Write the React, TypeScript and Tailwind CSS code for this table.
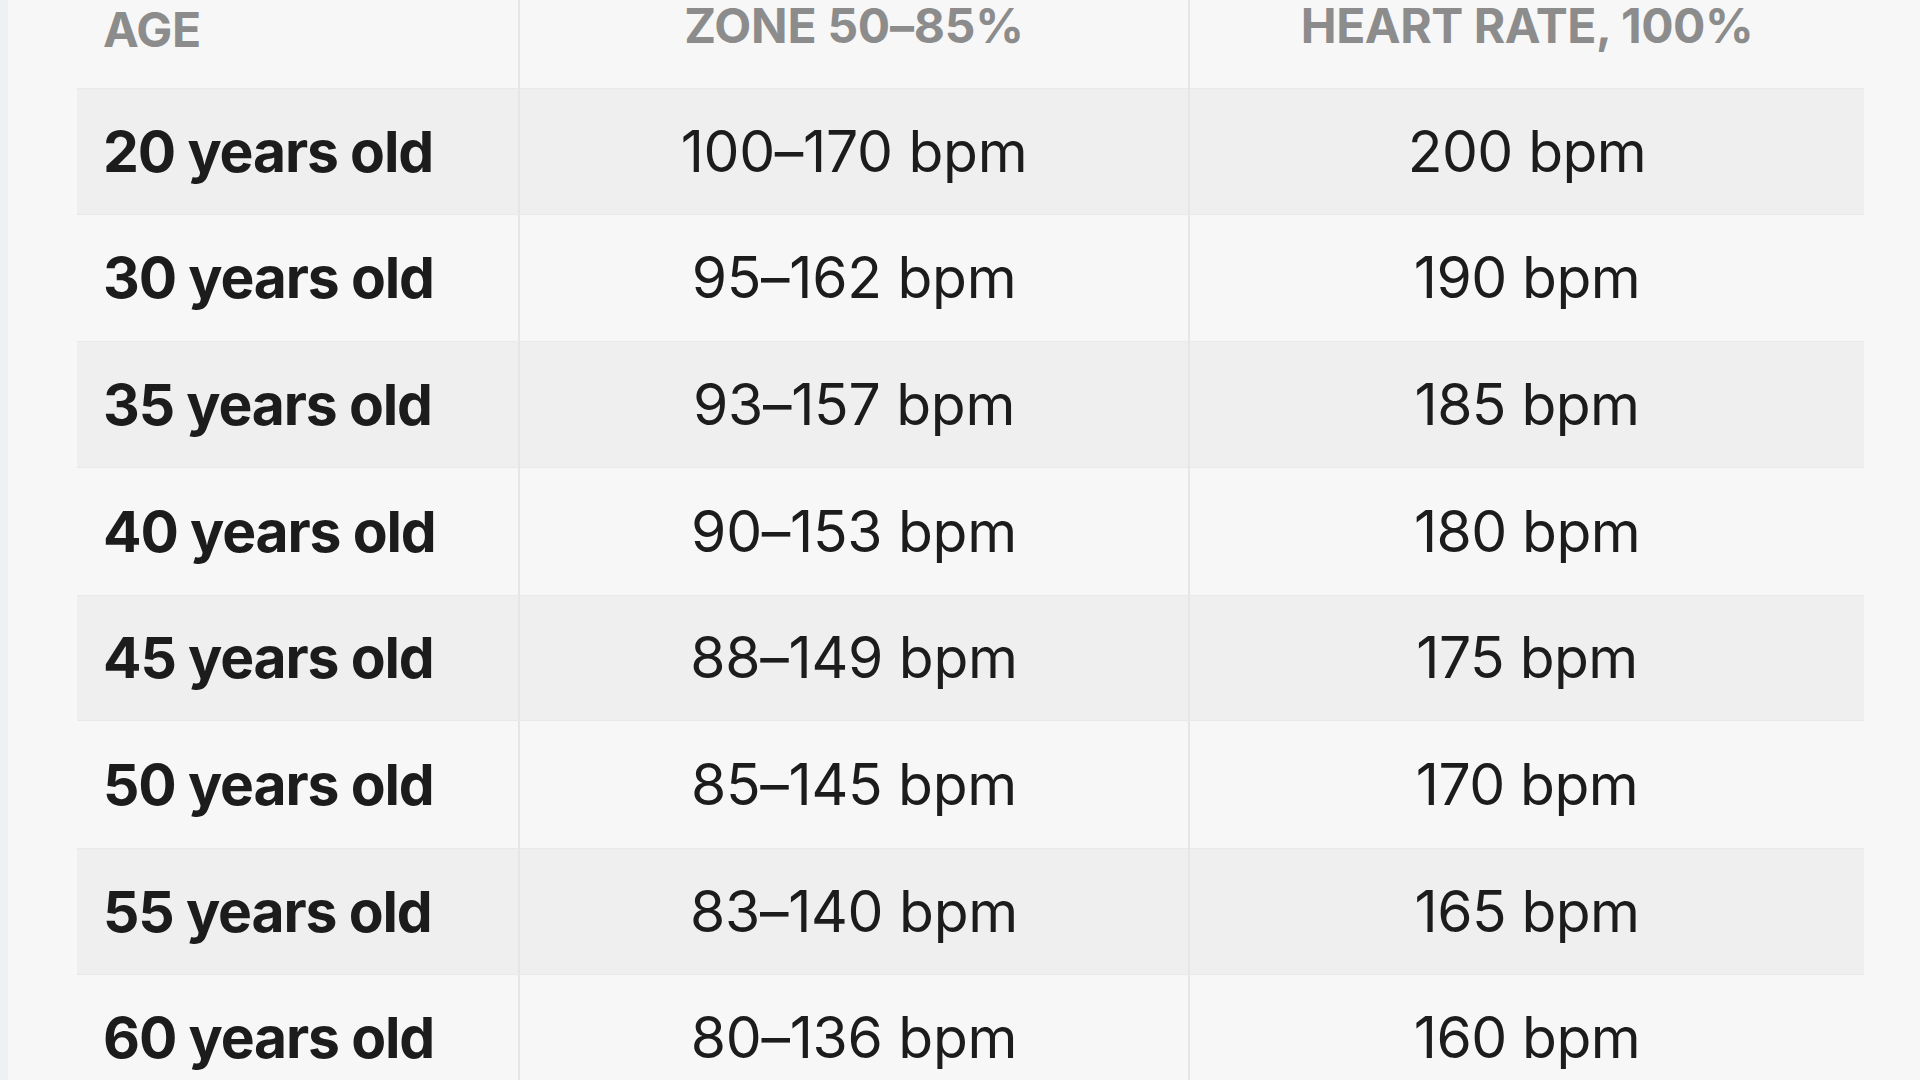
import React from "react";

const rows = [
  ["20 years old", "100–170 bpm", "200 bpm"],
  ["30 years old", "95–162 bpm", "190 bpm"],
  ["35 years old", "93–157 bpm", "185 bpm"],
  ["40 years old", "90–153 bpm", "180 bpm"],
  ["45 years old", "88–149 bpm", "175 bpm"],
  ["50 years old", "85–145 bpm", "170 bpm"],
  ["55 years old", "83–140 bpm", "165 bpm"],
  ["60 years old", "80–136 bpm", "160 bpm"],
];

export default function App() {
  return (
    <div className="w-[1920px] h-[1080px] overflow-hidden bg-[#f7f7f7] flex font-[family-name:Inter,sans-serif]">
      <div className="w-[8px] shrink-0 bg-[#eff0f2]" />
      <div className="ml-[69px] w-[1787px] shrink-0 flex flex-col">
        <div className="flex h-[88px] shrink-0">
          <div className="w-[443px] border-r-2 border-[#e6e6e6] pl-[26px] pt-[6px]">
            <span className="block text-[48px] leading-none font-bold tracking-[-0.01em] text-[#8c8c8c]">AGE</span>
          </div>
          <div className="w-[670px] border-r-2 border-[#e6e6e6] pt-[2px] text-center">
            <span className="block text-[48px] leading-none font-bold tracking-[-0.005em] text-[#8c8c8c]">ZONE 50–85%</span>
          </div>
          <div className="flex-1 pt-[2px] text-center">
            <span className="block text-[48px] leading-none font-bold tracking-[-0.01em] text-[#8c8c8c]">HEART RATE, 100%</span>
          </div>
        </div>
        {rows.map((r, i) => (
          <div
            key={r[0]}
            className={
              i % 2 === 0
                ? "flex h-[126.67px] shrink-0 bg-[#efefef] border-y border-[#e9e9e9]"
                : "flex h-[126.67px] shrink-0"
            }
          >
            <div className="w-[443px] border-r-2 border-[#e6e6e6] pl-[26px] flex items-center">
              <span className="text-[57px] leading-none font-bold tracking-[-0.02em] text-[#1c1c1c]">{r[0]}</span>
            </div>
            <div className="w-[670px] border-r-2 border-[#e6e6e6] flex items-center justify-center">
              <span className="text-[57px] leading-none font-normal tracking-[-0.005em] text-[#1c1c1c]">{r[1]}</span>
            </div>
            <div className="flex-1 flex items-center justify-center">
              <span className="text-[57px] leading-none font-normal tracking-[-0.01em] text-[#1c1c1c]">{r[2]}</span>
            </div>
          </div>
        ))}
      </div>
    </div>
  );
}
